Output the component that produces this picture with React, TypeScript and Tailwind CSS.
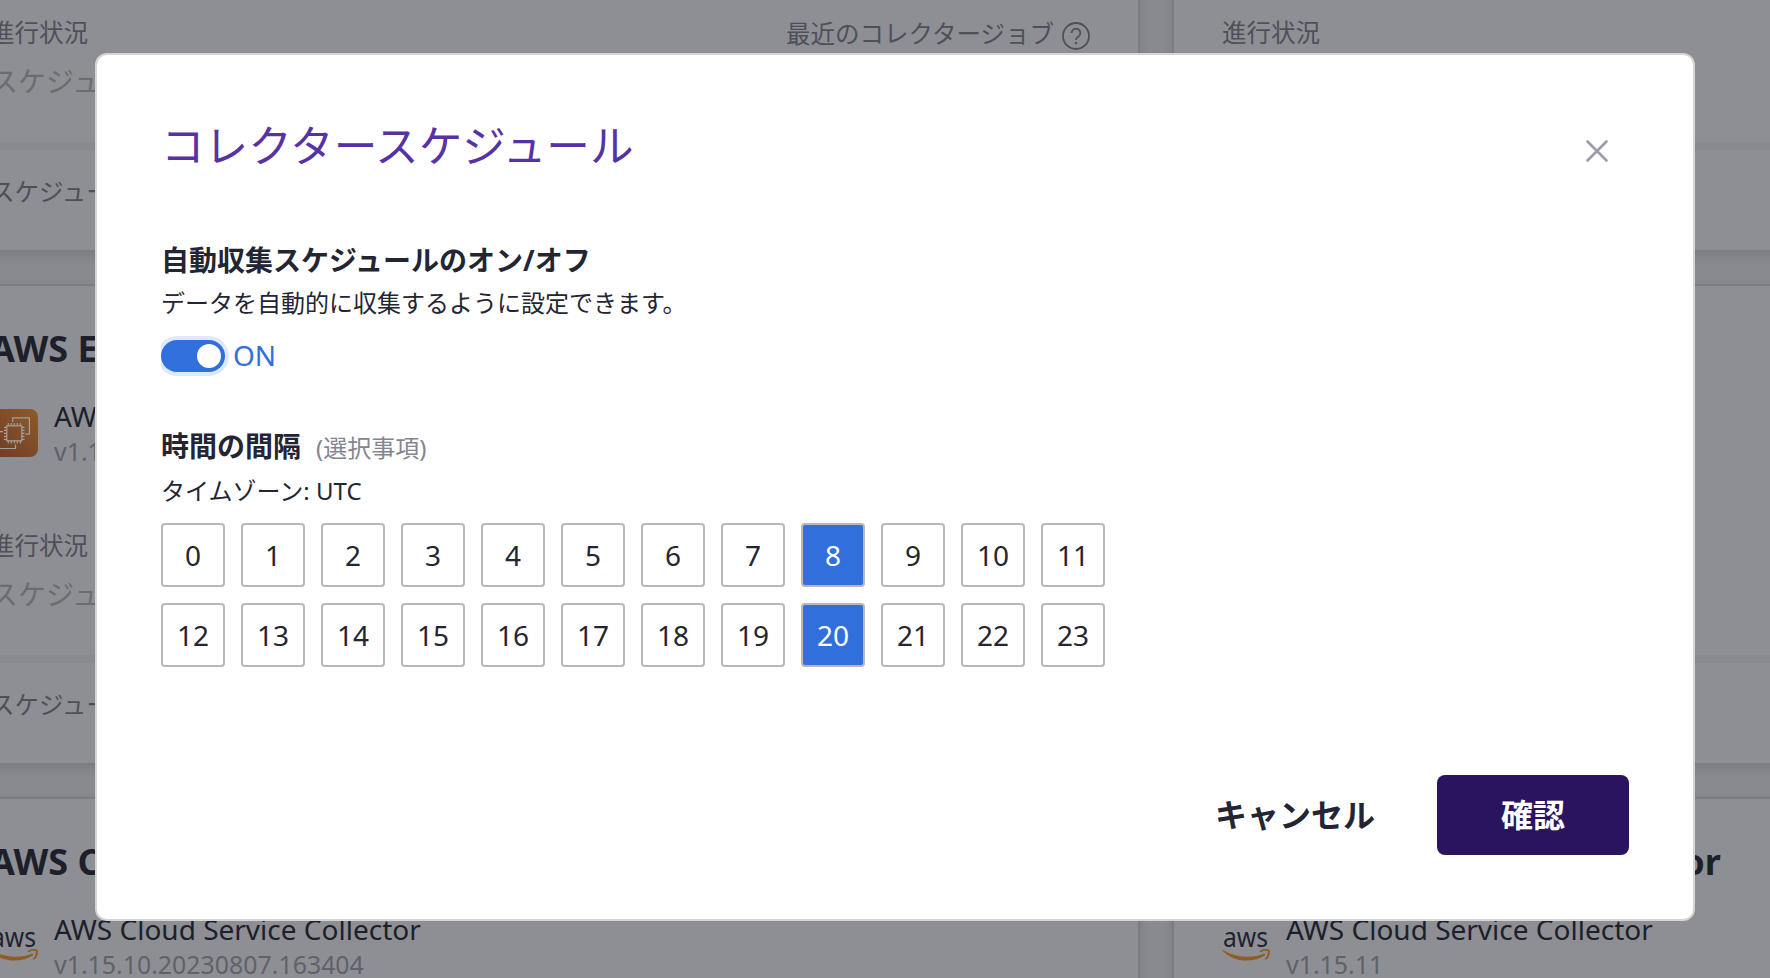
import React from "react";

const hours = Array.from({ length: 24 }, (_, i) => i);
const selectedHours = [8, 20];

function AwsLogo() {
  return (
    <svg width="48" height="48" viewBox="0 0 48 48" className="shrink-0">
      <text x="1" y="24.5" fontSize="28" textLength="45" lengthAdjust="spacingAndGlyphs" fill="#1f2330" fontFamily="'Noto Sans'">aws</text>
      <path d="M0.500 27.600C13 36 30 36.500 42.500 31.500L43.500 33C31 41.500 12 40.500 0.500 28.800Z" fill="#8f5d22" />
      <path d="M38 29.500C41 27.600 46 27.600 46.800 28.600C47.200 31 46 35 43.500 37.200" fill="none" stroke="#8f5d22" strokeWidth="1.8" />
    </svg>
  );
}

function Ec2Icon() {
  const pins = [0, 1, 2, 3, 4];
  return (
    <svg width="48" height="48" viewBox="0 0 48 48" className="shrink-0">
      <defs>
        <linearGradient id="ec2" x1="0" y1="1" x2="1" y2="0">
          <stop offset="0" stopColor="#6f3a22" />
          <stop offset="1" stopColor="#8d5b2c" />
        </linearGradient>
      </defs>
      <rect width="48" height="48" rx="8" fill="url(#ec2)" />
      <g fill="none" stroke="#a3a0a0" strokeWidth="1.2">
        <rect x="16.8" y="16.8" width="15" height="15" />
        {pins.map((p) => (
          <path key={p} d={`M${18.3 + p * 3} 16.500V14M${18.3 + p * 3} 32V34.500M16.500 ${18.3 + p * 3}H14M32 ${18.3 + p * 3}H34.500`} />
        ))}
        <path d="M22.700 13V8.800H39.400V25.200H35.500" />
        <path d="M25.500 35.500V39.500H8.800V22.700H13" />
      </g>
    </svg>
  );
}

function HelpIcon() {
  return (
    <svg width="28" height="28" viewBox="0 0 28 28" className="mt-[5px]" fill="none" stroke="#4e4f5a" strokeWidth="1.8">
      <circle cx="14" cy="14" r="13" />
      <path d="M9.600 11a4.400 4.400 0 1 1 6.900 3.600c-1.700 1.100-2.500 1.800-2.500 3.400" />
      <path d="M14 19.900v2.200" strokeWidth="2.200" />
    </svg>
  );
}

type CardProps = { title: string; name: string; version: string; icon: React.ReactNode };

function CollectorCard({ title, name, version, icon }: CardProps) {
  return (
    <section className="flex h-[481px] w-[1200px] shrink-0 flex-col border-2 border-[#7c7d82] bg-[#8e8f94] shadow-[0_4px_8px_rgba(40,40,50,0.14)]">
      <div className="flex h-[369px] shrink-0 flex-col px-12 pt-[39px]">
        <h2 className="text-[36px] leading-[48px] font-bold text-[#1d202b]">{title}</h2>
        <div className="mt-[25px] flex h-[70px] items-center gap-4">
          {icon}
          <div>
            <p className="h-9 text-[28px] leading-9 text-[#1d202b]">{name}</p>
            <p className="text-[24.9px] leading-[34px] text-[#60616a]">{version}</p>
          </div>
        </div>
        <div className="mt-[62px] flex justify-between text-[24.5px] leading-8 text-[#4e4f5a]">
          <span>進行状況</span>
          <span className="flex items-start gap-2">
            <span className="pt-px">最近のコレクタージョブ</span>
            <HelpIcon />
          </span>
        </div>
        <p className="mt-[11px] text-[28px] leading-10 text-[#6b6c71]">スケジュールなし</p>
      </div>
      <div className="h-2 shrink-0 bg-[#898a8f]" />
      <p className="px-12 pt-[26px] text-[24.5px] leading-8 text-[#4e4f5a]">スケジュール</p>
    </section>
  );
}

const cloud: CardProps = {
  title: "AWS Cloud Service Collector",
  name: "AWS Cloud Service Collector",
  version: "v1.15.10.20230807.163404",
  icon: <AwsLogo />,
};
const ec2: CardProps = { title: "AWS EC2 Collector", name: "AWS EC2 Collector", version: "v1.15.3", icon: <Ec2Icon /> };

export default function App() {
  return (
    <div className="relative h-[978px] w-[1770px] overflow-hidden bg-[#898a8f] font-['Noto_Sans','Noto_Sans_CJK_JP',sans-serif]">
      <main className="-mt-[229px] -ml-[60px] grid w-[2432px] grid-cols-[1200px_1200px] gap-8">
        <CollectorCard {...ec2} />
        <CollectorCard {...ec2} />
        <CollectorCard {...ec2} />
        <CollectorCard {...ec2} />
        <CollectorCard {...cloud} />
        <CollectorCard {...cloud} version="v1.15.11" />
      </main>

      <div className="absolute inset-0 flex items-start justify-center pl-[20px] pt-[53px]">
        <div role="dialog" className="flex h-[868px] w-[1600px] shrink-0 flex-col rounded-xl border-2 border-[#d5d5d7] bg-white px-16 pb-16 text-[#232533]">
          <header className="flex h-[122px] justify-between pt-[58px]">
            <h1 className="text-[43.6px] leading-[64px] text-[#5532a6]">コレクタースケジュール</h1>
            <svg width="24" height="24" viewBox="0 0 24 24" className="mt-[26px] mr-[20px]" stroke="#9c9da8" strokeWidth="2.600" strokeLinecap="round">
              <path d="M2.500 2.500 21.500 21.500M21.500 2.500 2.500 21.500" />
            </svg>
          </header>

          <div className="mt-[63px]">
            <h3 className="text-[28px] leading-10 font-bold">自動収集スケジュールのオン/オフ</h3>
            <p className="mt-[5px] text-[24px] leading-9">データを自動的に収集するように設定できます。</p>
            <div className="mt-[15px] flex items-center gap-2 overflow-hidden py-1">
              <span className="flex h-8 w-16 items-center justify-end rounded-full bg-[#3170dc] p-1 shadow-[0_0_0_4px_#dceafb]">
                <span className="size-6 rounded-full bg-white" />
              </span>
              <span className="-mt-px h-8 text-[28px] leading-[31px] text-[#3170dc]">ON</span>
            </div>
          </div>

          <div className="mt-[50px]">
            <h3 className="flex items-baseline gap-[15px] text-[28px] leading-10 font-bold">
              時間の間隔
              <span className="text-[24px] font-normal text-[#858591]">(選択事項)</span>
            </h3>
            <p className="mt-[5px] text-[24px] leading-9">タイムゾーン: UTC</p>
            <div className="mt-[14px] grid grid-cols-[repeat(12,64px)] gap-4">
              {hours.map((h) => (
                <button
                  key={h}
                  className={
                    selectedHours.includes(h)
                      ? "size-16 rounded border-2 border-[#b7b7bc] bg-[#3170dc] text-[28px] leading-[60px] text-white"
                      : "size-16 rounded border-2 border-[#b7b7bc] bg-white text-[28px] leading-[60px] text-[#232533]"
                  }
                >
                  {h}
                </button>
              ))}
            </div>
          </div>

          <footer className="mt-auto flex justify-end gap-[62px] text-[32px] font-bold">
            <button className="h-20">キャンセル</button>
            <button className="h-20 w-48 rounded-lg bg-[#2a1460] text-white">確認</button>
          </footer>
        </div>
      </div>
    </div>
  );
}
